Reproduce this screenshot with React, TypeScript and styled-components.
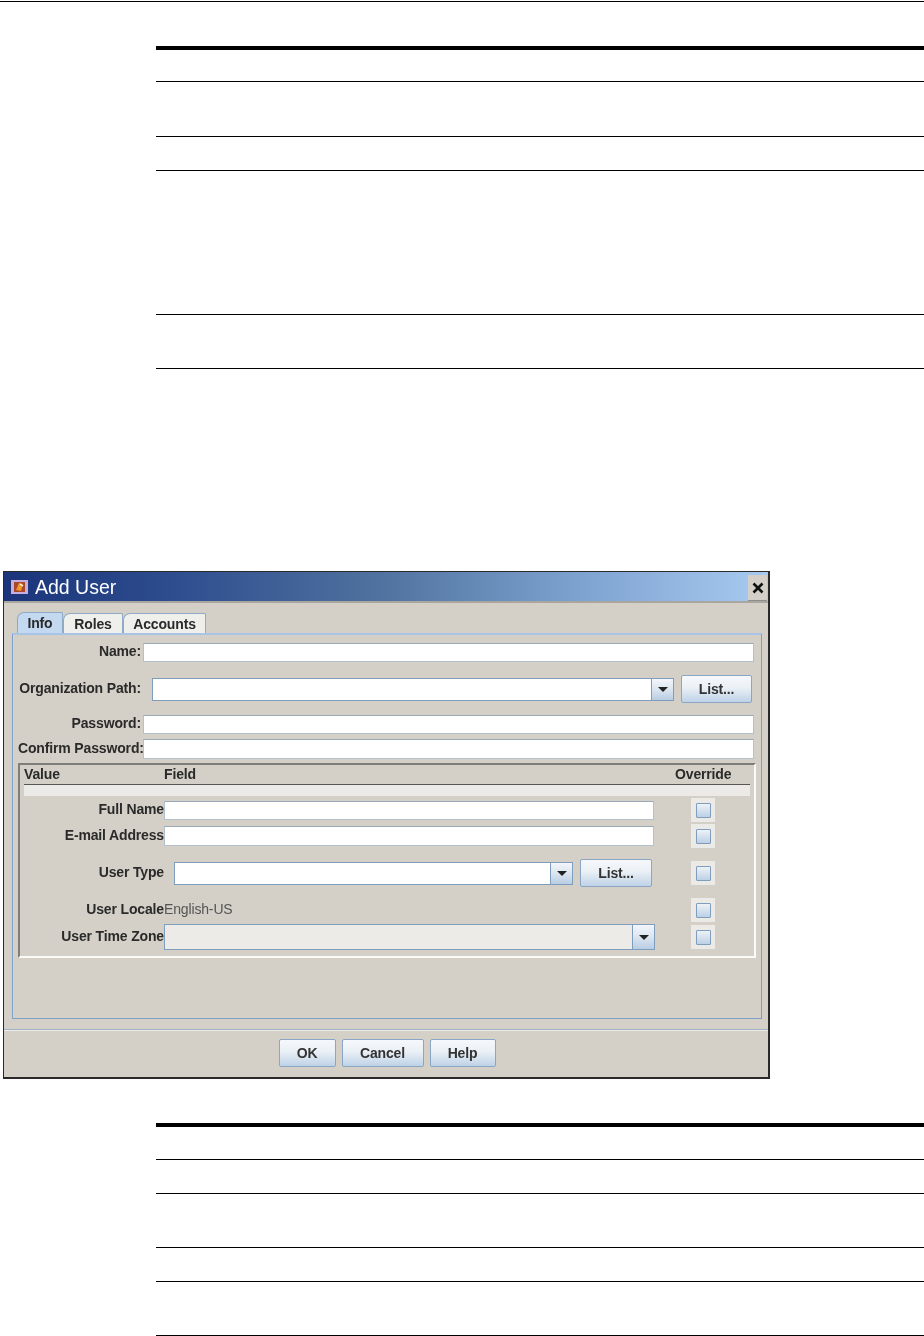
import React from "react";
import styled, { createGlobalStyle } from "styled-components";

const Global = createGlobalStyle`
  html, body { margin: 0; padding: 0; background: #fff; }
  body { font-family: "Liberation Sans", Arial, sans-serif; }
`;

const Page = styled.div`
  width: 924px;
  height: 1336px;
  overflow: hidden;
  display: flex;
  flex-direction: column;
  background: #fff;
`;

const HeaderRule = styled.div`
  height: 1px;
  margin-top: 1px;
  background: #000;
  flex: none;
`;

const RuleTable = styled.div<{ $top: number }>`
  margin: ${(p) => p.$top}px 0 0 156px;
  border-top: 4px solid #000;
  flex: none;
`;

const RuleRow = styled.div<{ $h: number }>`
  height: ${(p) => p.$h - 1}px;
  border-bottom: 1px solid #000;
`;

const DialogWrap = styled.div`
  margin: 202px 0 0 3px;
  width: 767px;
  height: 508px;
  box-sizing: border-box;
  border: 1px solid #2a2a2a;
  border-width: 1px 2px 2px 1px;
  background: #d4d0c8;
  display: flex;
  flex-direction: column;
  flex: none;
  font-size: 14px;
  letter-spacing: -0.15px;
  color: #2a2a2a;
`;

const TitleBar = styled.div`
  height: 29px;
  flex: none;
  display: flex;
  align-items: center;
  padding: 0 1px 0 7px;
  gap: 7px;
  background: linear-gradient(90deg, #1b347a 0%, #2d4d8e 22%, #50739f 50%, #7ea2cf 75%, #a6caf0 100%);
  border-bottom: 2px solid #a8a69f;
  filter: blur(0.5px);
`;

const TitleText = styled.span`
  flex: 1;
  color: #fff;
  font-size: 19.5px;
  line-height: 22px;
  letter-spacing: 0;
`;

const CloseButton = styled.div`
  width: 19px;
  height: 25px;
  margin-top: 3px;
  display: flex;
  align-items: center;
  justify-content: center;
  background: #d4d0c8;
  border-bottom: 1px solid #8f8d88;
`;

const Body = styled.div`
  flex: 1;
  display: flex;
  flex-direction: column;
  padding: 10px 6px 0 8px;
  filter: blur(0.55px);
`;

const TabStrip = styled.div`
  display: flex;
  height: 20px;
  padding-left: 5px;
  flex: none;
  align-items: flex-end;
`;

const Tab = styled.div<{ $active?: boolean; $w: number }>`
  width: ${(p) => p.$w}px;
  height: ${(p) => (p.$active ? 21 : 20)}px;
  box-sizing: border-box;
  display: flex;
  align-items: center;
  justify-content: center;
  font-weight: 700;
  background: ${(p) => (p.$active ? "#c3d9f0" : "#efefec")};
  border: 1px solid #8fa9c6;
  border-bottom: 0;
  border-radius: 7px 2px 0 0;
`;

const TabPanel = styled.div`
  height: 386px;
  box-sizing: border-box;
  border: 1px solid #7f9fc8;
  border-top: 2px solid #a9c4e6;
  box-shadow: inset 1px 0 0 #c8d6e6;
  padding: 8px 7px 0 5px;
  display: flex;
  flex-direction: column;
  flex: none;
`;

const FieldRow = styled.div<{ $h: number; $mt?: number }>`
  height: ${(p) => p.$h}px;
  margin-top: ${(p) => p.$mt ?? 0}px;
  display: flex;
  align-items: center;
  flex: none;
`;

const Label = styled.div<{ $gap: number }>`
  width: 123px;
  margin-right: ${(p) => p.$gap}px;
  padding-bottom: 3px;
  flex: none;
  text-align: right;
  font-weight: 700;
  white-space: nowrap;
`;

const TextBox = styled.div<{ $w: number }>`
  width: ${(p) => p.$w}px;
  height: 100%;
  box-sizing: border-box;
  background: #fff;
  border: 1px solid #b4c0cc;
  border-top-color: #9aa9ba;
  flex: none;
`;

const Combo = styled.div<{ $w: number; $h: number; $disabled?: boolean }>`
  width: ${(p) => p.$w}px;
  height: ${(p) => p.$h}px;
  box-sizing: border-box;
  display: flex;
  flex: none;
  background: ${(p) => (p.$disabled ? "#ecebe7" : "#fff")};
  border: 1px solid #7f9dbd;
`;

const ComboField = styled.div`
  flex: 1;
`;

const ComboArrow = styled.div`
  width: 21px;
  flex: none;
  display: flex;
  align-items: center;
  justify-content: center;
  border-left: 1px solid #7f9dbd;
  background: linear-gradient(180deg, #f3f6fa 0%, #dbe5f0 50%, #b9cde3 100%);
`;

const Caret = styled.div`
  width: 0;
  height: 0;
  border-left: 5px solid transparent;
  border-right: 5px solid transparent;
  border-top: 5px solid #222;
`;

const PushButton = styled.div<{ $w: number; $ml?: number }>`
  width: ${(p) => p.$w}px;
  height: 28px;
  margin-left: ${(p) => p.$ml ?? 0}px;
  box-sizing: border-box;
  display: flex;
  align-items: center;
  justify-content: center;
  flex: none;
  font-weight: 700;
  color: #333;
  border: 1px solid #8ba6c4;
  border-radius: 2px;
  background: linear-gradient(180deg, #f6f8fb 0%, #eaf0f6 45%, #bed2e7 100%);
`;

const Group = styled.div`
  margin: 4px 0 0 0;
  width: 738px;
  height: 195px;
  box-sizing: border-box;
  border: 2px solid #fafaf7;
  border-top-color: #7f7d78;
  border-left-color: #7f7d78;
  padding: 0 4px;
  display: flex;
  flex-direction: column;
  flex: none;
`;

const ColumnHeader = styled.div`
  height: 20px;
  flex: none;
  box-sizing: border-box;
  padding-bottom: 2px;
  border-bottom: 1px solid #555;
  display: grid;
  grid-template-columns: 140px 1fr 75px;
  align-items: center;
  font-weight: 700;
`;

const Band = styled.div`
  height: 11px;
  background: #ebeae6;
  flex: none;
`;

const FormRow = styled.div<{ $h: number; $mt: number }>`
  height: ${(p) => p.$h}px;
  margin-top: ${(p) => p.$mt}px;
  margin-left: -4px;
  display: grid;
  grid-template-columns: 144px 527px 24px;
  align-items: center;
  flex: none;
`;

const FormLabel = styled.div`
  text-align: right;
  font-weight: 700;
  white-space: nowrap;
  padding-bottom: 3px;
`;

const FormValue = styled.div<{ $h?: number; $ml?: number }>`
  display: flex;
  align-items: center;
  height: ${(p) => (p.$h ? `${p.$h}px` : "auto")};
  padding-left: ${(p) => p.$ml ?? 0}px;
`;

const LocaleText = styled.span`
  color: #555;
  padding-bottom: 3px;
`;

const CheckTile = styled.div`
  width: 24px;
  height: 24px;
  box-sizing: border-box;
  background: #ebeae6;
  display: flex;
  align-items: center;
  justify-content: center;
`;

const CheckBox = styled.div`
  width: 15px;
  height: 15px;
  box-sizing: border-box;
  border: 1px solid #7f9dbd;
  border-radius: 1px;
  background: linear-gradient(180deg, #edf2f7 0%, #bdd0e5 100%);
`;

const Footer = styled.div`
  flex: 1;
  margin: 10px -6px 0 -8px;
  border-top: 1px solid #9fb2c8;
  box-shadow: inset 0 1px 0 #eeece6;
  display: flex;
  justify-content: center;
  padding: 9px 0 0 0;
`;

const FooterInner = styled.div`
  display: flex;
  gap: 6px;
  margin-left: 2px;
  height: 28px;
`;

const AppIcon = () => (
  <svg width="17" height="14" viewBox="0 0 17 14">
    <rect width="17" height="14" fill="#c6aee0" />
    <rect x="3" y="2" width="11" height="10" fill="#a9482a" />
    <path d="M5 10 L8 3 L12 4 L10 11 Z" fill="#f09a2c" />
    <path d="M9 4 L12 6" stroke="#fff" strokeWidth="1.4" />
  </svg>
);

const CloseIcon = () => (
  <svg width="12" height="12" viewBox="0 0 12 12">
    <path d="M1.5 1.5 L10.5 10.5 M10.5 1.5 L1.5 10.5" stroke="#111" strokeWidth="2.6" />
  </svg>
);

const Check = () => (
  <CheckTile>
    <CheckBox />
  </CheckTile>
);

const ComboBox = ({ w, h, disabled }: { w: number; h: number; disabled?: boolean }) => (
  <Combo $w={w} $h={h} $disabled={disabled}>
    <ComboField />
    <ComboArrow>
      <Caret />
    </ComboArrow>
  </Combo>
);

export default function App() {
  return (
    <Page>
      <Global />
      <HeaderRule />
      <RuleTable $top={44}>
        <RuleRow $h={32} />
        <RuleRow $h={55} />
        <RuleRow $h={34} />
        <RuleRow $h={144} />
        <RuleRow $h={54} />
      </RuleTable>
      <DialogWrap>
        <TitleBar>
          <AppIcon />
          <TitleText>Add User</TitleText>
          <CloseButton>
            <CloseIcon />
          </CloseButton>
        </TitleBar>
        <Body>
          <TabStrip>
            <Tab $active $w={46}>Info</Tab>
            <Tab $w={60}>Roles</Tab>
            <Tab $w={83}>Accounts</Tab>
          </TabStrip>
          <TabPanel>
            <FieldRow $h={19}>
              <Label $gap={2}>Name:</Label>
              <TextBox $w={611} />
            </FieldRow>
            <FieldRow $h={28} $mt={13}>
              <Label $gap={11}>Organization Path:</Label>
              <ComboBox w={522} h={23} />
              <PushButton $w={71} $ml={7}>List...</PushButton>
            </FieldRow>
            <FieldRow $h={19} $mt={12}>
              <Label $gap={2}>Password:</Label>
              <TextBox $w={611} />
            </FieldRow>
            <FieldRow $h={20} $mt={5}>
              <Label $gap={2}>Confirm Password:</Label>
              <TextBox $w={611} />
            </FieldRow>
            <Group>
              <ColumnHeader>
                <span>Value</span>
                <span>Field</span>
                <span>Override</span>
              </ColumnHeader>
              <Band />
              <FormRow $h={24} $mt={2}>
                <FormLabel>Full Name</FormLabel>
                <FormValue $h={19}><TextBox $w={490} /></FormValue>
                <Check />
              </FormRow>
              <FormRow $h={24} $mt={2}>
                <FormLabel>E-mail Address</FormLabel>
                <FormValue $h={20}><TextBox $w={490} /></FormValue>
                <Check />
              </FormRow>
              <FormRow $h={28} $mt={11}>
                <FormLabel>User Type</FormLabel>
                <FormValue $ml={10}>
                  <ComboBox w={399} h={23} />
                  <PushButton $w={72} $ml={7}>List...</PushButton>
                </FormValue>
                <Check />
              </FormRow>
              <FormRow $h={24} $mt={11}>
                <FormLabel>User Locale</FormLabel>
                <FormValue><LocaleText>English-US</LocaleText></FormValue>
                <Check />
              </FormRow>
              <FormRow $h={26} $mt={2}>
                <FormLabel>User Time Zone</FormLabel>
                <FormValue><ComboBox w={491} h={26} disabled /></FormValue>
                <Check />
              </FormRow>
            </Group>
          </TabPanel>
          <Footer>
            <FooterInner>
              <PushButton $w={57}>OK</PushButton>
              <PushButton $w={82}>Cancel</PushButton>
              <PushButton $w={66}>Help</PushButton>
            </FooterInner>
          </Footer>
        </Body>
      </DialogWrap>
      <RuleTable $top={44}>
        <RuleRow $h={33} />
        <RuleRow $h={34} />
        <RuleRow $h={54} />
        <RuleRow $h={34} />
        <RuleRow $h={54} />
      </RuleTable>
    </Page>
  );
}
